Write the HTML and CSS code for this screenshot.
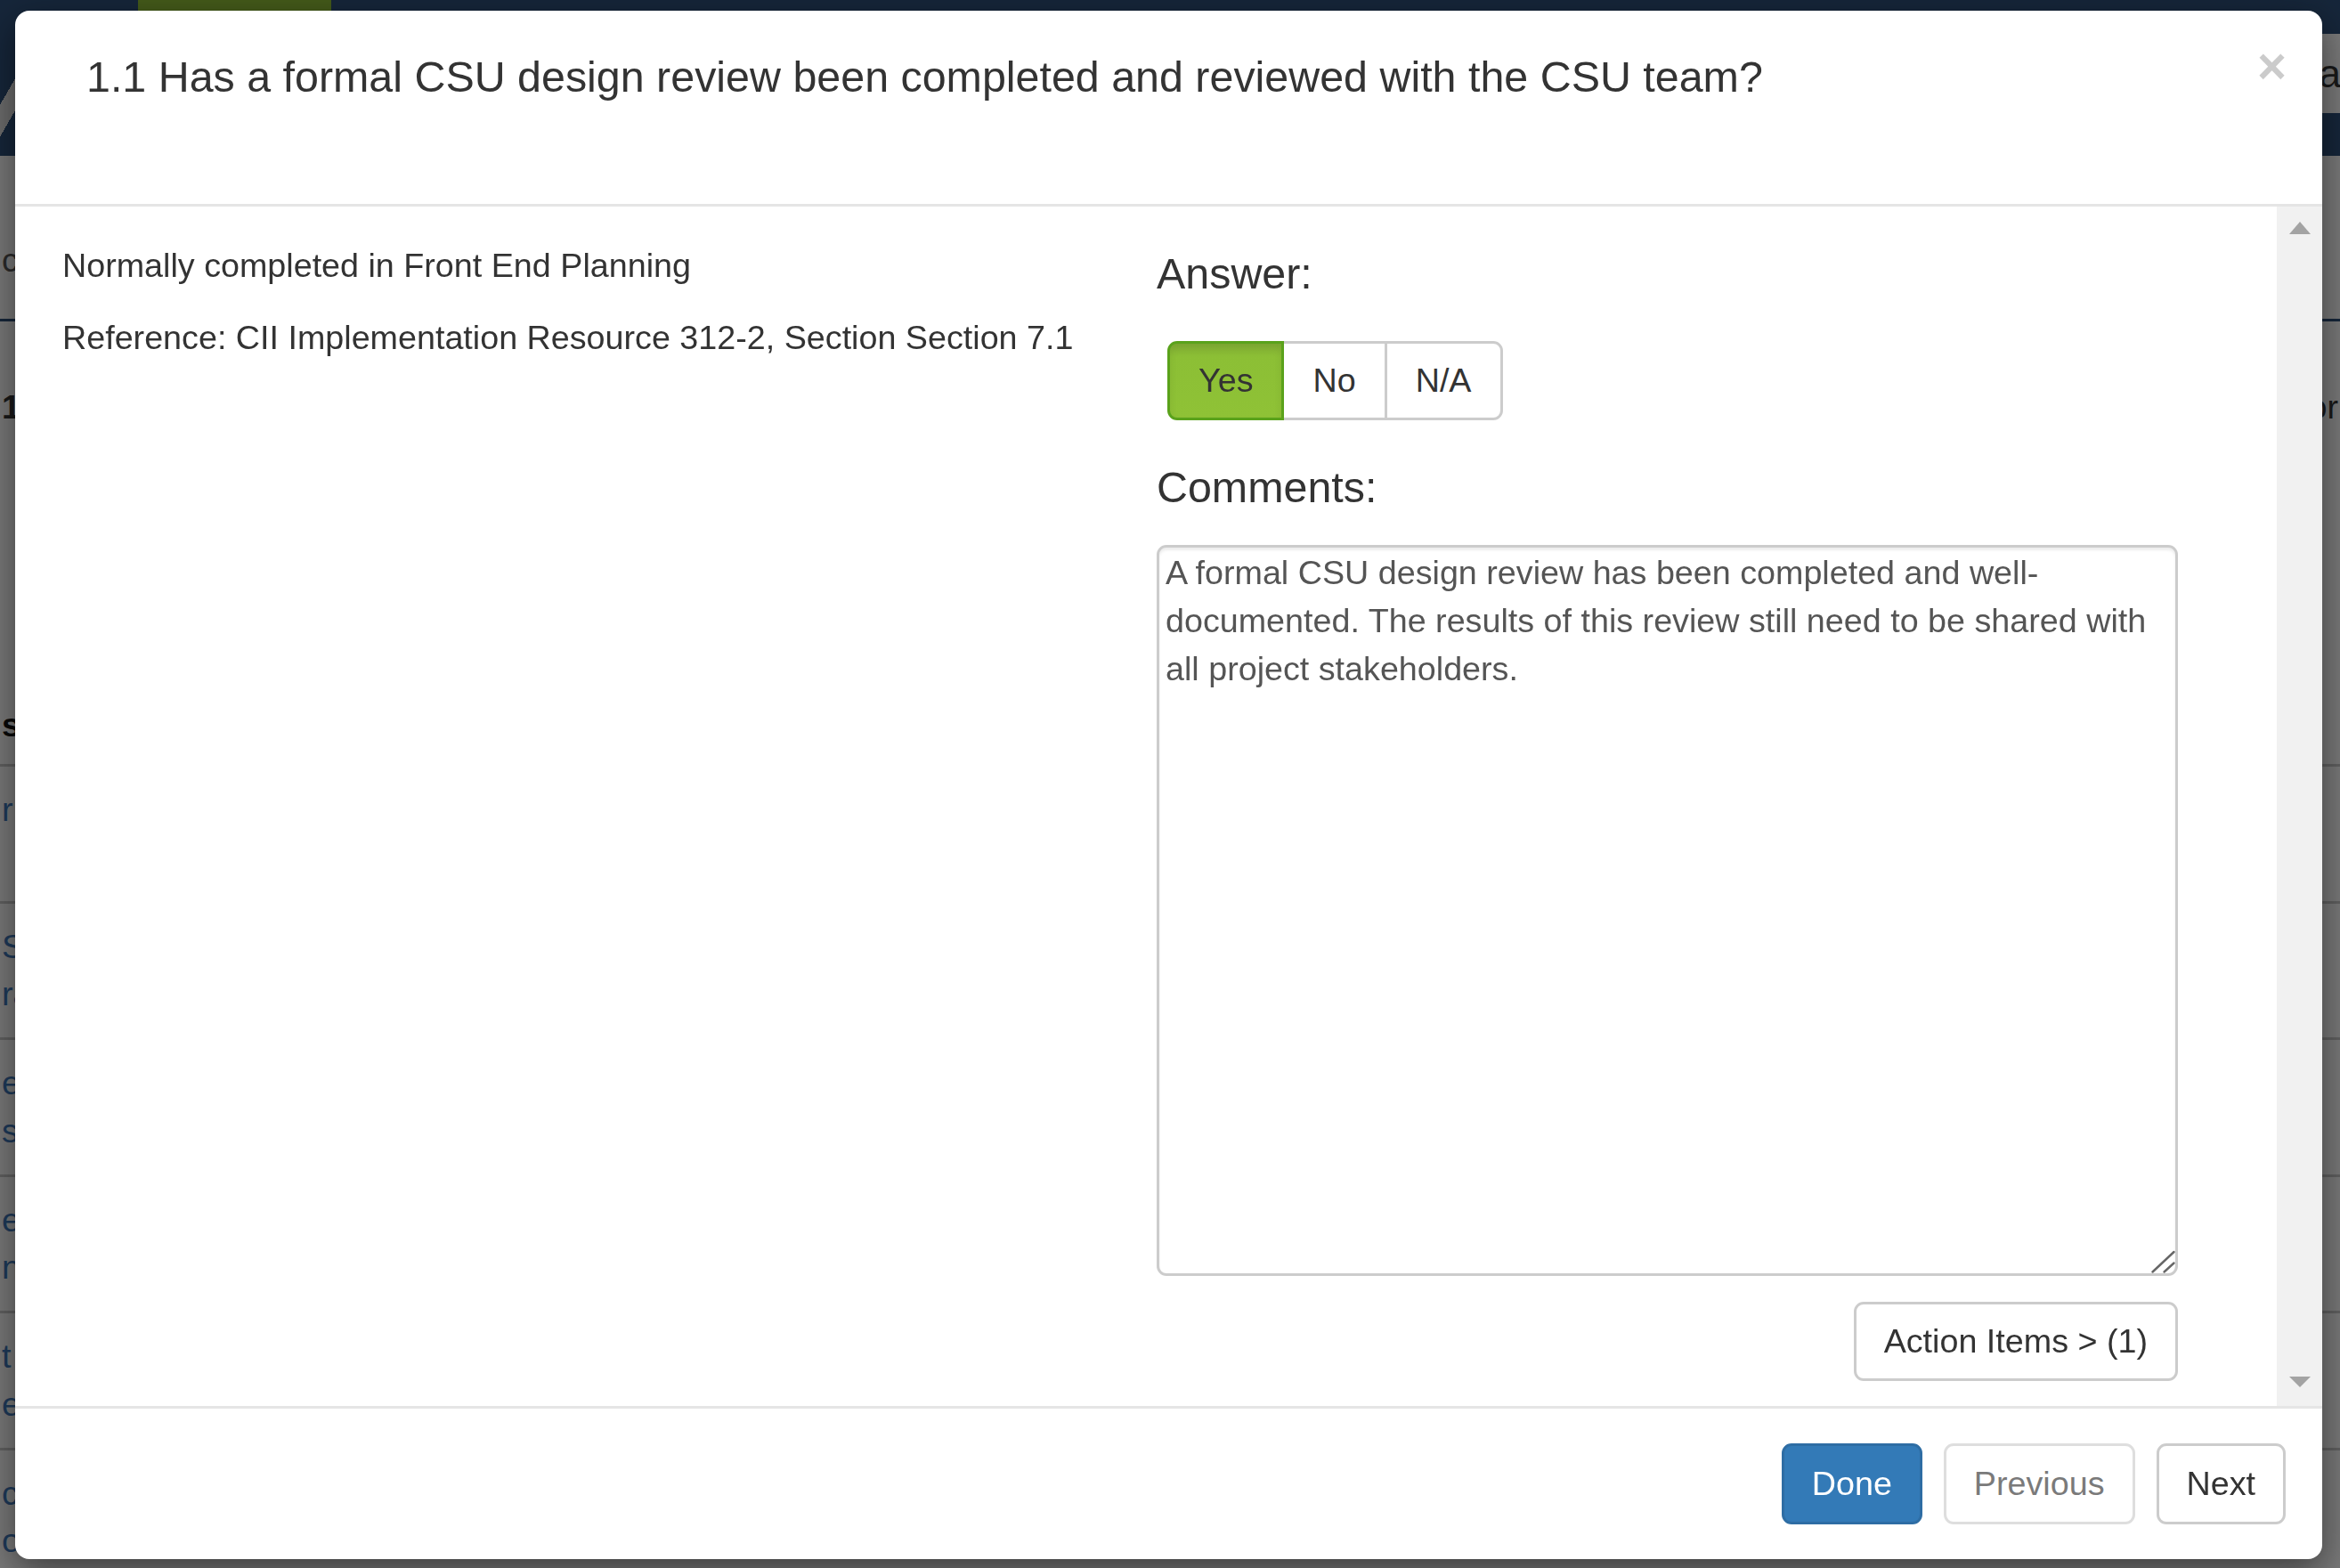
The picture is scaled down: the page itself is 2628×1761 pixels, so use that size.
FILE: index.html
```html
<!DOCTYPE html>
<html lang="en">

<head>
  <meta charset="UTF-8">
  <meta name="viewport" content="width=device-width, initial-scale=1.0">
  <title>Checklist Question</title>
  <link rel="stylesheet" href="styles.css">
</head>

<body>
  <!-- page behind the dialog -->
  <div class="page">
    <div class="topbar">
      <span class="brand"></span>
      <span class="nav-tab"></span>
      <span class="nav-search">pa</span>
    </div>
    <div class="page-head">
      <span class="page-crumb">cost</span>
    </div>
    <div class="summary">
      <span class="summary-num">1</span>
      <span class="summary-side">or</span>
    </div>
    <div class="list-head">
      <span>s</span>
    </div>
    <div class="list">
      <div class="list-row"><span>r</span></div>
      <div class="list-row"><span>S</span><span>ra</span></div>
      <div class="list-row"><span>e</span><span>st</span></div>
      <div class="list-row"><span>e</span><span>n</span></div>
      <div class="list-row"><span>t</span><span>e</span></div>
      <div class="list-row"><span>c</span><span>o</span></div>
    </div>
  </div>

  <div class="modal-backdrop"></div>

  <div class="modal">
    <div class="modal-content">
      <div class="modal-header">
        <h4 class="modal-title">1.1 Has a formal CSU design review been completed and reviewed with the CSU team?</h4>
        <button class="close" type="button">&times;</button>
      </div>

      <div class="modal-middle">
        <div class="modal-body">
          <div class="question-info">
            <p>Normally completed in Front End Planning</p>
            <p>Reference: CII Implementation Resource 312-2, Section Section 7.1</p>
          </div>

          <div class="question-answer">
            <h4 class="field-label answer-label">Answer:</h4>
            <div class="btn-group">
              <button class="btn btn-answer active" type="button">Yes</button>
              <button class="btn btn-answer" type="button">No</button>
              <button class="btn btn-answer" type="button">N/A</button>
            </div>

            <h4 class="field-label comments-label">Comments:</h4>
            <div class="comment-box">
              <textarea class="form-control" id="comments">A formal CSU design review has been completed and well-documented. The results of this review still need to be shared with all project stakeholders.</textarea>
              <svg class="grip" width="30" height="30" viewBox="0 0 30 30">
                <line x1="1.5" y1="25.5" x2="25.5" y2="3" />
                <line x1="14.5" y1="25.5" x2="25.5" y2="15.5" />
              </svg>
            </div>

            <div class="action-row">
              <button class="btn btn-default" type="button">Action Items &gt; (1)</button>
            </div>
          </div>
        </div>

        <div class="scrollbar">
          <span class="arrow-up"></span>
          <span class="arrow-down"></span>
        </div>
      </div>

      <div class="modal-footer">
        <button class="btn btn-primary" type="button">Done</button>
        <button class="btn btn-default" type="button" disabled>Previous</button>
        <button class="btn btn-default" type="button">Next</button>
      </div>
    </div>
  </div>
</body>

</html>
```

FILE: styles.css
```css
* {
  margin: 0;
  padding: 0;
  box-sizing: border-box;
}

html,
body {
  height: 100%;
  overflow: hidden;
}

body {
  font-family: "Liberation Sans", Arial, Helvetica, sans-serif;
  font-size: 37.7px;
  line-height: 53.9px;
  color: #333;
  background-color: #f2f2f2;
}

/* ---------- page behind the dialog ---------- */

.page {
  height: 100%;
  overflow: hidden;
}

.topbar {
  display: flex;
  align-items: flex-start;
  height: 175px;
  background-color: #2c4c74;
}

.brand {
  width: 17px;
  height: 90px;
  margin-top: 70px;
  background: linear-gradient(120deg, transparent 40%, #d8d8d8 40%, #d8d8d8 70%, transparent 70%);
}

.nav-tab {
  width: 217px;
  height: 38px;
  margin-left: 138px;
  background-color: #88b434;
}

.nav-search {
  width: 52px;
  height: 89px;
  margin-top: 38px;
  margin-left: auto;
  padding-left: 4px;
  background-color: #f2f2f2;
  font-size: 44px;
  line-height: 89px;
  color: #333;
}

.page-head {
  height: 186px;
  padding-top: 91px;
  border-bottom: 3px solid #2c4c74;
  color: #555;
}

.page-crumb {
  margin-left: 2px;
}

.summary {
  display: flex;
  justify-content: space-between;
  height: 409px;
  padding: 70px 2px 0;
  font-weight: bold;
}

.summary-side {
  font-weight: normal;
}

.list-head {
  height: 88px;
  padding-left: 2px;
  line-height: 88px;
  font-weight: bold;
  color: #111;
}

.list-row {
  display: flex;
  flex-direction: column;
  height: 153.5px;
  padding: 22px 0 0 2px;
  border-top: 3px solid #c0c0c0;
  color: #3c74b4;
}

/* ---------- dialog ---------- */

.modal-backdrop {
  position: fixed;
  top: 0;
  right: 0;
  bottom: 0;
  left: 0;
  background-color: rgba(0, 0, 0, 0.5);
}

.modal {
  position: fixed;
  top: 0;
  right: 0;
  bottom: 0;
  left: 0;
  display: flex;
  padding: 12px 20px 10px 17px;
}

.modal-content {
  flex: 1;
  display: flex;
  flex-direction: column;
  background-color: #fff;
  border-radius: 16px;
  box-shadow: 0 13px 40px rgba(0, 0, 0, 0.5);
  overflow: hidden;
}

.modal-header {
  display: flex;
  align-items: flex-start;
  height: 220px;
  padding: 40px 40px 0 80px;
  border-bottom: 3px solid #e5e5e5;
}

.modal-title {
  flex: 1;
  font-size: 48.4px;
  font-weight: normal;
  line-height: 69px;
  color: #333;
}

.close {
  margin-top: -5px;
  border: none;
  background: none;
  font-family: inherit;
  font-size: 56.5px;
  font-weight: bold;
  line-height: 1;
  color: #000;
  opacity: 0.2;
  cursor: pointer;
}

.modal-middle {
  flex: 1;
  display: flex;
  min-height: 0;
}

.modal-body {
  flex: 1;
  display: grid;
  grid-template-columns: 1fr 1147px;
  column-gap: 40px;
  align-items: start;
  padding: 40px 111px 0 53px;
  overflow: hidden;
}

.question-info p {
  margin-bottom: 27px;
}

.field-label {
  font-size: 48.4px;
  font-weight: normal;
  line-height: 53.2px;
  color: #333;
}

.answer-label {
  margin-top: 8.6px;
}

.comments-label {
  margin-top: 48.6px;
}

.btn {
  padding: 14px 31px;
  border: 3px solid transparent;
  border-radius: 11px;
  background-color: #fff;
  font-family: inherit;
  font-size: 37.7px;
  line-height: 55px;
  color: #333;
  white-space: nowrap;
  cursor: pointer;
}

.btn-default {
  border-color: #ccc;
}

.btn-default:disabled {
  opacity: 0.65;
  cursor: not-allowed;
}

.btn-primary {
  background-color: #337ab7;
  border-color: #2e6da4;
  color: #fff;
}

.btn-group {
  display: flex;
  width: max-content;
  margin: 49.2px 0 0 12px;
}

.btn-answer {
  position: relative;
  padding: 14px 32px;
  border-color: #ccc;
  border-radius: 0;
}

.btn-answer + .btn-answer {
  margin-left: -3px;
}

.btn-answer:first-child {
  border-radius: 11px 0 0 11px;
}

.btn-answer:last-child {
  border-radius: 0 11px 11px 0;
}

.btn-answer.active {
  z-index: 2;
  background: linear-gradient(to bottom, #83b134 0%, #8cbf35 18%, #8fc236 100%);
  border-color: #5aa21b;
  box-shadow: inset 0 5px 8px rgba(0, 0, 0, 0.08);
}

.comment-box {
  position: relative;
  margin-top: 38.2px;
}

.form-control {
  display: block;
  width: 100%;
  height: 821px;
  padding: 2px 7px;
  border: 3px solid #ccc;
  border-radius: 11px;
  box-shadow: inset 0 3px 3px rgba(0, 0, 0, 0.075);
  font-family: inherit;
  font-size: 37.7px;
  line-height: 53.9px;
  color: #555;
  resize: none;
  overflow: hidden;
  outline: none;
}

.grip {
  position: absolute;
  right: 0;
  bottom: 0;
  stroke: #666;
  stroke-width: 2.4;
  stroke-linecap: round;
}

.action-row {
  display: flex;
  justify-content: flex-end;
  margin-top: 29px;
}

.scrollbar {
  display: flex;
  flex-direction: column;
  justify-content: space-between;
  align-items: center;
  width: 51px;
  padding: 17px 0 21px;
  background-color: #f1f1f1;
}

.arrow-up {
  width: 0;
  height: 0;
  border-left: 12.5px solid transparent;
  border-right: 12.5px solid transparent;
  border-bottom: 14px solid #a3a3a3;
}

.arrow-down {
  width: 0;
  height: 0;
  border-left: 12.5px solid transparent;
  border-right: 12.5px solid transparent;
  border-top: 12px solid #a3a3a3;
}

.modal-footer {
  display: flex;
  justify-content: flex-end;
  align-items: flex-start;
  gap: 24px;
  height: 172px;
  padding: 39px 41px 0;
  border-top: 3px solid #e5e5e5;
}

.modal-footer .btn {
  padding: 15px 31px;
}
```
